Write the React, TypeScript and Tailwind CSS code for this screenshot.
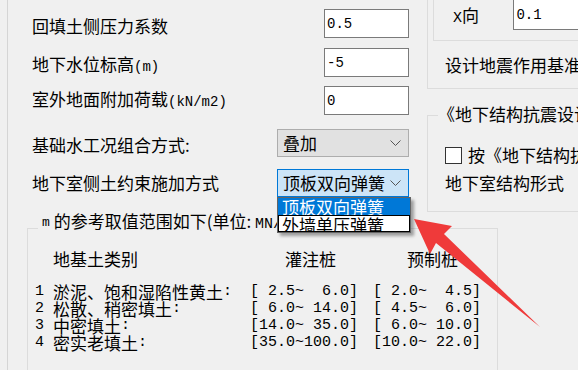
import React from 'react';

const MONO = "font-['Liberation_Mono','Noto_Sans_CJK_SC',monospace]";

const Chevron: React.FC = () => (
  <svg width="11" height="6" viewBox="0 0 11 6" className="ml-auto mr-[7px]">
    <polyline points="0.5,0.5 5.5,5.5 10.5,0.5" fill="none" stroke="#555" strokeWidth="1" />
  </svg>
);

const Input: React.FC<{ value: string; className?: string }> = ({ value, className = '' }) => (
  <div
    className={`bg-white border border-[#7a7a7a] pl-[2px] flex items-center text-[14px] ${MONO} ${className}`}
  >
    {value}
  </div>
);

const LeftControls: React.FC = () => (
  <div className="w-[419px] shrink-0 pl-[24px] flex flex-col">
    <div className="flex items-center mt-[9px] h-[29px]">
      <span className="w-[245px] pt-[5px]">回填土侧压力系数</span>
      <div className="w-[132px] flex justify-end">
        <Input value="0.5" className="w-[85px] h-[29px]" />
      </div>
    </div>
    <div className="flex items-center mt-[10px] h-[29px]">
      <span className="w-[245px] pt-[5px]">
        地下水位标高<span className={`text-[14px] ${MONO}`}>(m)</span>
      </span>
      <div className="w-[132px] flex justify-end">
        <Input value="-5" className="w-[85px] h-[29px]" />
      </div>
    </div>
    <div className="flex items-center mt-[9px] h-[29px]">
      <span className="w-[245px]">
        室外地面附加荷载<span className={`text-[14px] ${MONO}`}>(kN/m2)</span>
      </span>
      <div className="w-[132px] flex justify-end">
        <Input value="0" className="w-[85px] h-[29px]" />
      </div>
    </div>
    <div className="flex items-center mt-[14px] h-[28px]">
      <span className="w-[245px] pt-[4px]">基础水工况组合方式:</span>
      <div className="w-[132px] h-[28px] border border-[#adadad] bg-[#e1e1e1] flex items-center pl-[5px]">
        叠加
        <Chevron />
      </div>
    </div>
    <div className="flex items-center mt-[12px] h-[28px]">
      <span className="w-[245px]">地下室侧土约束施加方式</span>
      <div className="relative w-[132px] h-[28px] border border-[#0078d7] bg-[#cce4f7] flex items-center pl-[5px]">
        顶板双向弹簧
        <Chevron />
        <div className="absolute left-[-1px] top-[27px] w-[134px] h-[36px] bg-white border border-[#646464] shadow-[3px_3px_3px_rgba(0,0,0,0.35)] z-10 flex flex-col leading-[17px]">
          <div className="h-[17px] bg-[#0078d7] text-white pl-[4px] overflow-hidden">顶板双向弹簧</div>
          <div className="h-[17px] border border-black pl-[3px] overflow-hidden">外墙单压弹簧</div>
        </div>
      </div>
    </div>
  </div>
);

const RightPanel: React.FC = () => (
  <div className="w-[160px] shrink-0 flex flex-col whitespace-nowrap">
    <div className="h-[89px] border-l border-b border-[#dcdcdc] flex flex-col">
      <div className="ml-[5px] h-[41px] border-l border-b border-[#dcdcdc] flex items-start pl-[19px]">
        <span className="w-[66px] mt-[5px]">
          <span className={`text-[15px] ${MONO}`}>X</span>向
        </span>
        <Input value="0.1" className="w-[80px] h-[31px] -mt-[1px]" />
      </div>
      <span className="ml-[17px] mt-[14px]">设计地震作用基准期</span>
    </div>
    <fieldset className="mt-[15px] h-[108px] border border-[#dcdcdc]">
      <legend className="ml-[10px] px-0 pb-[2px] leading-[20px] whitespace-nowrap">
        《地下结构抗震设计标准》
      </legend>
      <div className="ml-[17px] mt-[19px] h-[20px] flex items-center">
        <div className="w-[17px] h-[17px] border border-[#333] bg-white shrink-0" />
        <span className="ml-[6px]">按《地下结构抗震设计标准》</span>
      </div>
      <div className="ml-[17px] mt-[8px] h-[20px]">地下室结构形式</div>
    </fieldset>
  </div>
);

const rows = [
  ['1', '淤泥、饱和湿陷性黄土', '[ 2.5~  6.0]', '[ 2.0~  4.5]'],
  ['2', '松散、稍密填土', '[ 6.0~ 14.0]', '[ 4.5~  6.0]'],
  ['3', '中密填土', '[14.0~ 35.0]', '[ 6.0~ 10.0]'],
  ['4', '密实老填土', '[35.0~100.0]', '[10.0~ 22.0]'],
];

const RefTable: React.FC = () => (
  <fieldset className="ml-[19px] w-[471px] h-[200px] border border-[#dcdcdc]">
    <legend className="ml-[10px] px-[4px] h-[30px] whitespace-nowrap">
      <div className="h-[20px] flex items-center">
        <span className={`text-[13px] ${MONO}`}>m</span>
        <span className="ml-[4px] leading-[20px]">
          的参考取值范围如下(单位: <span className={`text-[15px] ${MONO}`}>MN/m4)</span>
        </span>
      </div>
    </legend>
    <div className="ml-[7px] mt-[6px] grid grid-cols-[215px_123px_1fr] h-[20px]">
      <span className="pl-[18px]">地基土类别</span>
      <span className="pl-[35px]">灌注桩</span>
      <span className="pl-[34px]">预制桩</span>
    </div>
    <div className="ml-[7px] mt-[14px] grid grid-cols-[215px_123px_1fr] auto-rows-[17px] whitespace-pre">
      {rows.map(([n, name, a, b]) => (
        <React.Fragment key={n}>
          <div className="h-[17px] flex items-center">
            <span className={`text-[15px] ${MONO}`}>{n} </span>
            <span>{name}</span>
            <span className={`text-[15px] ${MONO}`}>:</span>
          </div>
          <div className={`h-[17px] flex items-center text-[15px] ${MONO}`}>{a}</div>
          <div className={`h-[17px] flex items-center text-[15px] ${MONO}`}>{b}</div>
        </React.Fragment>
      ))}
    </div>
  </fieldset>
);

const Arrow: React.FC = () => (
  <svg className="absolute left-0 top-0 pointer-events-none z-20" width="578" height="370">
    <polygon
      points="414,219 452,226 444,234 540,327 436,243 430,254"
      fill="#ef3a3a"
    />
  </svg>
);

export default function App() {
  return (
    <div className="relative w-[578px] h-[370px] overflow-hidden bg-[#f0f0f0] text-black text-[17px] leading-[20px] font-['Noto_Sans_CJK_SC',sans-serif]">
      <div className="ml-[7px] h-full border-l border-[#d5d5d5]">
        <div className="flex h-[213px]">
          <LeftControls />
          <RightPanel />
        </div>
        <RefTable />
      </div>
      <Arrow />
    </div>
  );
}
